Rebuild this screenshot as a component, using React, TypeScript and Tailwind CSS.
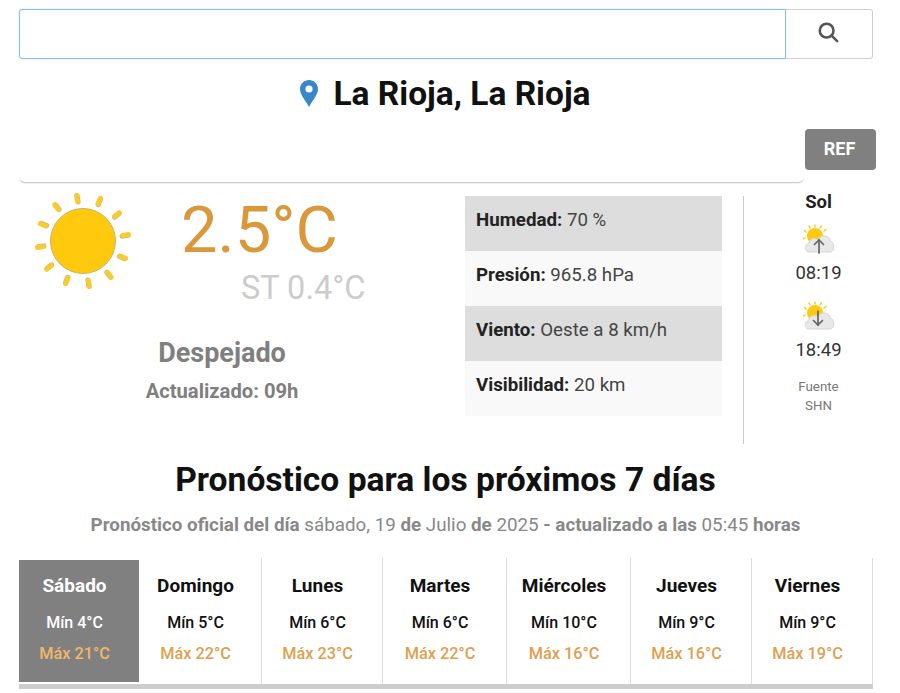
const days = [
  { n: "Sábado", min: "4", max: "21", w: "w-[120px]" },
  { n: "Domingo", min: "5", max: "22", w: "w-[123px]" },
  { n: "Lunes", min: "6", max: "23", w: "w-[121px]" },
  { n: "Martes", min: "6", max: "22", w: "w-[124px]" },
  { n: "Miércoles", min: "10", max: "16", w: "w-[124px]" },
  { n: "Jueves", min: "9", max: "16", w: "w-[121px]" },
  { n: "Viernes", min: "9", max: "19", w: "w-[121px]" },
];

const stats = [
  { k: "Humedad:", v: "70 %", c: "bg-[#dddddd]" },
  { k: "Presión:", v: "965.8 hPa", c: "bg-[#f9f9f9]" },
  { k: "Viento:", v: "Oeste a 8 km/h", c: "bg-[#dddddd]" },
  { k: "Visibilidad:", v: "20 km", c: "bg-[#f9f9f9]" },
];

function Sun() {
  const angles = [-8, 22, 52, 82, 112, 142, 172, 202, 232, 262, 292, 322];
  return (
    <svg width="104" height="104" viewBox="0 0 104 104">
      {angles.map((a) => (
        <g key={a} transform={`rotate(${a} 52 52)`}>
          <line x1="52.6" y1="12.6" x2="52.6" y2="6.6" stroke="#c9b68a" strokeWidth="5" strokeLinecap="round" />
          <line x1="52" y1="12" x2="52" y2="6" stroke="#f8cb2e" strokeWidth="5" strokeLinecap="round" />
        </g>
      ))}
      <circle cx="52" cy="52" r="32.5" fill="#ffc90e" stroke="#c9b36a" strokeWidth="1" />
    </svg>
  );
}

function CloudSun({ down }: { down?: boolean }) {
  return (
    <svg width="32" height="32" viewBox="0 0 32 32">
      <g stroke="#f8c91c" strokeWidth="1.4" strokeLinecap="round">
        <line x1="2" y1="14" x2="0.5" y2="15" />
        <line x1="3" y1="8" x2="1.5" y2="6.5" />
        <line x1="7" y1="4" x2="6" y2="2" />
        <line x1="12" y1="3" x2="12" y2="1" />
        <line x1="17" y1="4" x2="18.5" y2="2" />
        <line x1="21" y1="7" x2="23" y2="5.5" />
      </g>
      <circle cx="12" cy="12" r="8" fill="#fdc913" />
      <path d="M6 28 C1 28 1 20 6 19 C6 15 12 13 15 16 C17 10 27 11 27 17 C32 18 32 28 27 28 Z" fill="#e8e8e8" stroke="#d6d6d6" />
      {down ? (
        <g stroke="#666" strokeWidth="1.7" fill="none" strokeLinecap="round">
          <path d="M15 10 V24" />
          <path d="M10.5 19.5 L15 24 L19.5 19.5" />
        </g>
      ) : (
        <g stroke="#666" strokeWidth="1.7" fill="none" strokeLinecap="round">
          <path d="M16 16 V29" />
          <path d="M11.5 20.5 L16 16 L20.5 20.5" />
        </g>
      )}
    </svg>
  );
}

export default function App() {
  return (
    <div className="w-[900px] h-[693px] overflow-hidden bg-white font-['Roboto',sans-serif] pl-[19px] pt-[9px] text-[#212529]">
      <div className="w-[854px]">
        <div className="flex h-[50px]">
          <div className="flex-1 border border-[#80bdff] rounded-l-[3px] shadow-[0_0_1px_rgba(0,123,255,0.4)]" />
          <div className="w-[87px] border border-l-0 border-[#cfcfcf] rounded-r-[3px] flex items-center justify-center">
            <svg width="22" height="22" viewBox="0 0 24 24" fill="none" stroke="#555" strokeWidth="2.8" strokeLinecap="round" className="-mt-[5px] -ml-[3px]">
              <circle cx="10.5" cy="10.5" r="7.5" />
              <path d="M16 16 L22 22" />
            </svg>
          </div>
        </div>

        <h1 className="mt-[16px] h-[38px] flex items-center justify-center gap-[15px] pr-[1px] text-[33.5px] leading-[38px] font-bold text-[#111]">
          <svg width="18" height="27" viewBox="0 0 18 27" className="-mt-[1px]">
            <path d="M9 0 C4 0 0 4 0 9 C0 15 6 21 9 27 C12 21 18 15 18 9 C18 4 14 0 9 0 Z" fill="#3787c9" />
            <circle cx="9" cy="9" r="3.6" fill="#fff" />
          </svg>
          <span>La Rioja, La Rioja</span>
        </h1>

        <div className="relative h-[62px] w-[785px] border-b border-[#cccccc] rounded-b-[6px] mt-[8px] shadow-[0_1px_1px_rgba(0,0,0,0.06)]">
          <div className="absolute left-[786px] top-[8px] w-[71px] h-[41px] pb-[2px] pr-[2px] rounded-[4px] bg-[#808080] text-white font-bold text-[18px] flex items-center justify-center">
            REF
          </div>
        </div>

        <div className="flex mt-[13px] h-[248px]">
          <div className="w-[446px] shrink-0 flex flex-col">
            <div className="flex">
              <div className="ml-[12px] -mt-[7px]">
                <Sun />
              </div>
              <div className="w-[330px]">
                <div className="ml-[46px] text-[65px] leading-[70px] text-[#d9983a] font-normal -mt-[1px]">2.5°C</div>
                <div className="ml-[106px] mt-[4px] text-[32.5px] leading-[38px] text-[#cccccc]">ST 0.4°C</div>
              </div>
            </div>
            <div className="text-center w-[406px] mt-[31px] text-[27px] leading-[30px] font-bold text-[#7f7f7f]">Despejado</div>
            <div className="text-center w-[406px] mt-[11px] text-[20.2px] leading-[24px] font-bold text-[#7f7f7f]">Actualizado: 09h</div>
          </div>

          <div className="w-[257px] shrink-0">
            {stats.map((s) => (
              <div key={s.k} className={`h-[55px] pl-[11px] pt-[12px] text-[18.7px] leading-[24px] text-[#444] ${s.c}`}>
                <b className="font-bold text-[#222]">{s.k}</b> {s.v}
              </div>
            ))}
          </div>

          <div className="ml-[21px] w-[1px] h-[248px] shrink-0 bg-[#cccccc]" />

          <div className="w-[150px] shrink-0 flex flex-col items-center -ml-[1px] pl-[1px] text-center">
            <div className="-mt-[5px] text-[18.5px] leading-[22px] font-bold text-[#222]">Sol</div>
            <div className="mt-[11px] h-[32px]"><CloudSun /></div>
            <div className="mt-[5px] text-[18.5px] leading-[24px] text-[#333]">08:19</div>
            <div className="mt-[16px] h-[32px]"><CloudSun down /></div>
            <div className="mt-[5px] text-[18.5px] leading-[24px] text-[#333]">18:49</div>
            <div className="mt-[15px] text-[13.3px] leading-[19px] text-[#777]">Fuente<br />SHN</div>
          </div>
        </div>

        <h2 className="mt-[16px] -ml-[1px] text-center text-[33.6px] leading-[40px] font-bold text-[#111] whitespace-nowrap">Pronóstico para los próximos 7 días</h2>
        <p className="mt-[13px] -ml-[1px] text-center text-[18.8px] leading-[24px] text-[#888] whitespace-nowrap">
          <b>Pronóstico oficial del día</b> sábado, 19 <b>de</b> Julio <b>de</b> 2025 <b>- actualizado a las</b> 05:45 <b>horas</b>
        </p>

        <div className="mt-[21px] flex h-[131px] border-b-[5px] border-[#cccccc]">
          {days.map((d, i) => (
            <div
              key={d.n}
              className={`${d.w} flex flex-col items-center pr-[9px] font-medium ${
                i === 0 ? "bg-[#808080] text-white mt-[2px] mb-[2px] pt-[14px]" : "border-r border-[#dddddd] text-[#111] pt-[16px]"
              }`}
            >
              <div className="text-[19px] leading-[24px] font-bold">{d.n}</div>
              <div className="mt-[14px] text-[16px] leading-[22px]">Mín {d.min}°C</div>
              <div className={`mt-[9px] text-[16.3px] leading-[22px] ${i === 0 ? "text-[#f0b866]" : "text-[#dfa04f]"}`}>Máx {d.max}°C</div>
            </div>
          ))}
        </div>
      </div>
    </div>
  );
}
